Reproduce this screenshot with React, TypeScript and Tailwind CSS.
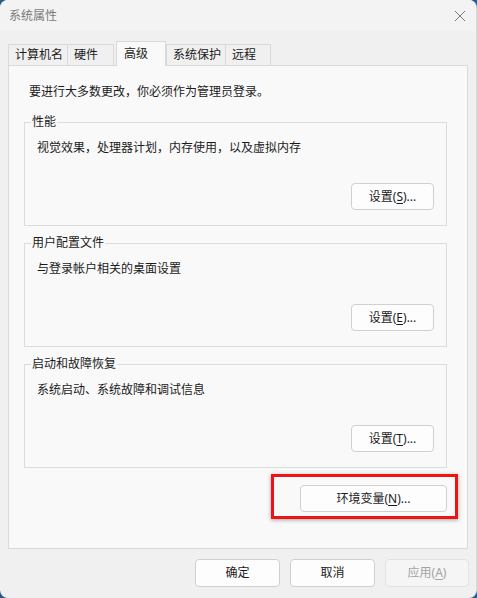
import React from "react";

const font = { fontFamily: '"Noto Sans", "Noto Sans CJK SC", sans-serif' };

function Btn({ children, className = "", disabled = false }: { children: React.ReactNode; className?: string; disabled?: boolean }) {
  return (
    <div
      className={
        "flex items-center justify-center rounded-[4px] border text-[12px] leading-[16px] whitespace-nowrap " +
        (disabled
          ? "border-[#e3e3e3] bg-[#f5f5f5] text-[#a3a3a3] "
          : "border-[#d0d0d0] bg-[#fdfdfd] text-[#1b1b1b] ") +
        className
      }
    >
      {children}
    </div>
  );
}

function Group({ title, desc, btn, keyChar }: { title: string; desc: string; btn: string; keyChar: string }) {
  return (
    <fieldset className="border border-[#dcdcdc] px-[12px] pb-[15px] ml-[15px] mr-[20px]">
      <legend className="ml-[-6px] px-[1px] text-[12px] leading-[16px] text-[#1b1b1b]">{title}</legend>
      <div className="mt-[10px] text-[12px] leading-[16px] text-[#1b1b1b]">{desc}</div>
      <div className="mt-[27px] flex justify-end">
        <Btn className="w-[83px] h-[27px]">
          {btn}(<u className="underline-offset-2">{keyChar}</u>)...
        </Btn>
      </div>
    </fieldset>
  );
}

export default function App() {
  const tabs = ["计算机名", "硬件", "高级", "系统保护", "远程"];
  const widths = ["w-[60px]", "w-[47px] -ml-px", "", "w-[60px] -ml-[2px]", "w-[46px] -ml-px"];
  return (
    <div className="w-[477px] h-[598px] bg-[#2b5b88]" style={font}>
      <div className="w-[477px] h-[598px] bg-[#f0f0f0] rounded-[8px] overflow-hidden flex flex-col border-r border-[#dadada]">
        {/* Title bar */}
        <div className="h-[31px] bg-[#f3f3f3] flex items-center justify-between pl-[9px] pr-[9px]">
          <span className="text-[12px] leading-[16px] text-[#7a7a7a]">系统属性</span>
          <svg width="12" height="12" viewBox="0 0 12 12" className="mr-[1px]">
            <path d="M1 1 L11 11 M11 1 L1 11" stroke="#7a7a7a" strokeWidth="1" />
          </svg>
        </div>
        {/* Tabs */}
        <div className="flex items-end pl-[8px] mt-[10px] h-[24px] relative z-10">
          {tabs.map((t, i) =>
            i === 2 ? (
              <div
                key={t}
                className="h-[25px] -mb-px mx-[2px] px-[7px] pt-[4px] border border-b-0 border-[#d9d9d9] bg-[#f9f9f9] text-[12px] leading-[16px] text-[#1b1b1b] w-[50px] whitespace-nowrap"
              >
                {t}
              </div>
            ) : (
              <div
                key={t}
                className={
                  "h-[21px] px-[6px] flex items-center border border-b-0 border-[#d9d9d9] bg-[#f0f0f0] text-[12px] leading-[16px] text-[#1b1b1b] whitespace-nowrap " +
                  widths[i]
                }
              >
                {t}
              </div>
            )
          )}
        </div>
        {/* Panel */}
        <div className="ml-[8px] w-[460px] h-[484px] border border-[#d9d9d9] bg-[#f9f9f9] flex flex-col pt-[18px]">
          <div className="ml-[20px] text-[12px] leading-[16px] text-[#1b1b1b]">要进行大多数更改，你必须作为管理员登录。</div>
          <div className="mt-[14px] flex flex-col gap-[9px]">
            <Group title="性能" desc="视觉效果，处理器计划，内存使用，以及虚拟内存" btn="设置" keyChar="S" />
            <Group title="用户配置文件" desc="与登录帐户相关的桌面设置" btn="设置" keyChar="E" />
            <Group title="启动和故障恢复" desc="系统启动、系统故障和调试信息" btn="设置" keyChar="T" />
          </div>
          <div className="mt-[17px] mr-[20px] flex justify-end">
            <div className="relative">
              <Btn className="w-[147px] h-[27px]">
                环境变量(<u className="underline-offset-2">N</u>)...
              </Btn>
              <div className="absolute left-[-29px] right-[-11px] top-[-11px] bottom-[-7px] border-[3px] border-[#ee1414] shadow-[0_1px_4px_rgba(0,0,0,0.35)] pointer-events-none" />
            </div>
          </div>
        </div>
        {/* Footer */}
        <div className="mt-[10px] flex justify-end gap-[10px] pr-[7px]">
          <Btn className="w-[85px] h-[28px]">确定</Btn>
          <Btn className="w-[85px] h-[28px]">取消</Btn>
          <Btn className="w-[84px] h-[28px]" disabled>
            应用(<u className="underline-offset-2">A</u>)
          </Btn>
        </div>
      </div>
    </div>
  );
}
